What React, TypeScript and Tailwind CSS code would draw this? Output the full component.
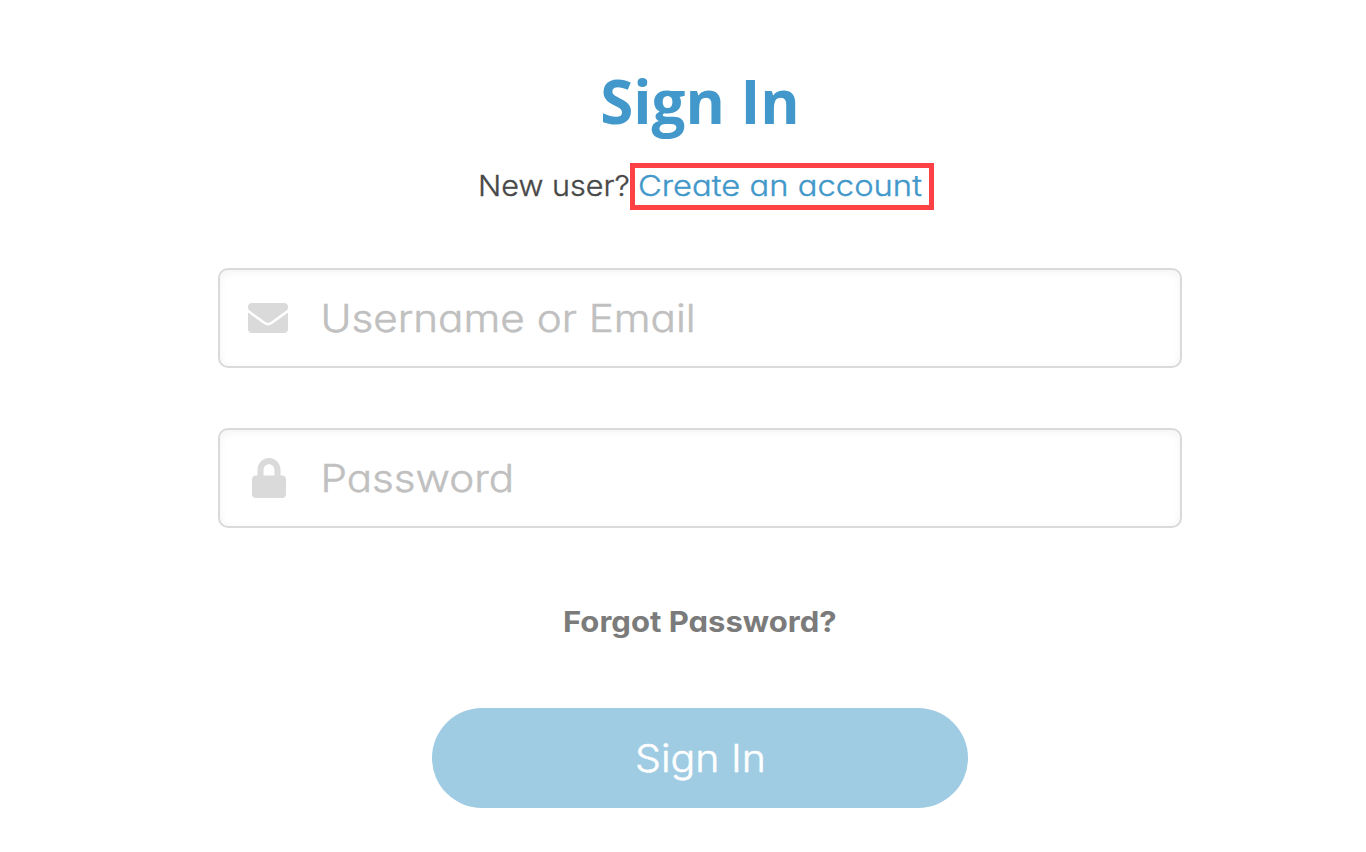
import React from 'react';
import { FaEnvelope, FaLock } from 'react-icons/fa';

type FieldProps = { icon: React.ReactNode; placeholder: string; type: string };

function Field({ icon, placeholder, type }: FieldProps) {
  return (
    <label className="flex h-[100px] w-[964px] items-center rounded-[10px] border-2 border-[#dadada] bg-white shadow-[inset_0_2px_8px_rgba(0,0,0,0.05)]">
      <span className="flex w-24 shrink-0 justify-center text-[40px] text-[#dadada]">{icon}</span>
      <input
        type={type}
        placeholder={placeholder}
        aria-label={placeholder}
        className="h-full w-[770px] origin-left scale-x-[1.096] bg-transparent pl-[4px] text-[38.5px] font-light text-[#555] outline-none [-webkit-text-stroke:0.5px] placeholder:text-[#c0c0c0] placeholder:opacity-100"
      />
    </label>
  );
}

export default function App() {
  return (
    <main className="flex h-[852px] w-[1366px] flex-col items-center overflow-hidden bg-white pl-[34px] font-['Inter',sans-serif] [font-feature-settings:'cv11']">
      <h1 className="mt-[59px] h-[84px] whitespace-nowrap font-['Open_Sans',sans-serif] text-[60px] leading-[84px] font-bold text-[#4298ca]">Sign In</h1>
      <p className="mt-[20px] ml-[444px] flex h-[47px] w-[456px] items-stretch self-start text-[29px] leading-[35px] font-light whitespace-nowrap [-webkit-text-stroke:0.35px]">
        <span className="w-[152px] shrink-0 pt-[5px] text-[#484848]">
          <span className="inline-block origin-left scale-x-[1.055]">New user?</span>
        </span>
        <a href="#" className="w-[304px] shrink-0 border-[5px] border-[#fd4144] pl-[2.5px] text-[#4298ca]">
          <span className="inline-block origin-left scale-x-[1.13]">Create an account</span>
        </a>
      </p>
      <form className="mt-[58px] flex flex-col items-center">
        <Field icon={<FaEnvelope />} placeholder="Username or Email" type="text" />
        <div className="h-[60px]" />
        <Field icon={<FaLock className="ml-0.5 w-[34px]" preserveAspectRatio="none" />} placeholder="Password" type="password" />
        <a href="#" className="mt-[74px] h-10 scale-x-[1.07] text-[29px] leading-10 font-bold whitespace-nowrap text-[#7b7b7b]">Forgot Password?</a>
        <button type="button" className="mt-[66px] h-[100px] w-[536px] rounded-full bg-[#a0cce3] pt-0.5 text-[38.5px] font-light text-white [-webkit-text-stroke:0.5px]">
          <span className="inline-block scale-x-[1.066]">Sign In</span>
        </button>
      </form>
    </main>
  );
}
